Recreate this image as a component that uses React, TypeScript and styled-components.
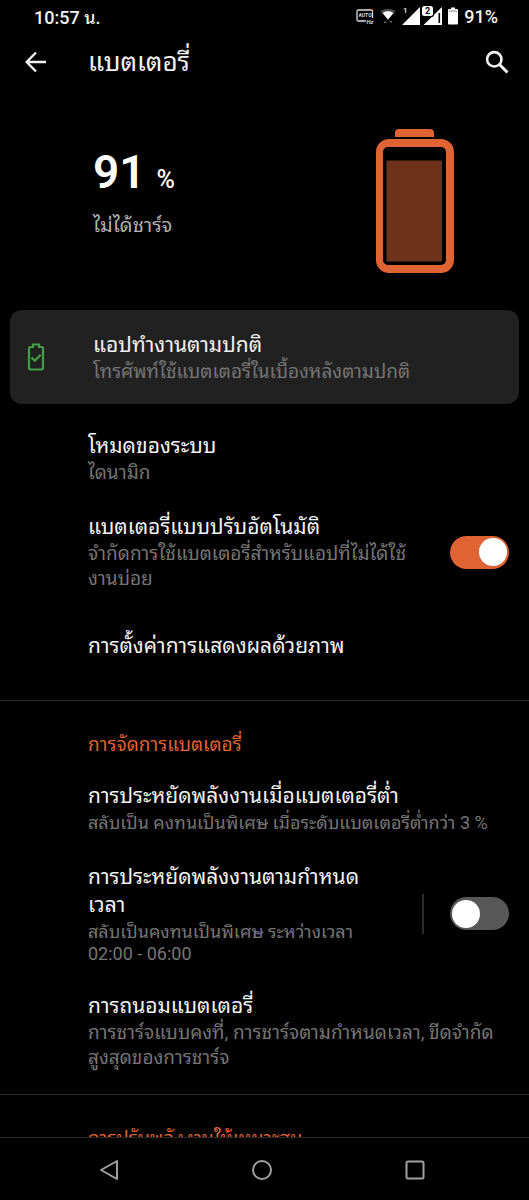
import React from "react";
import styled, { createGlobalStyle } from "styled-components";

const ACCENT = "#df6333";

const GlobalStyle = createGlobalStyle`
  * { box-sizing: border-box; }
  body {
    margin: 0;
    background: #000;
    color: #f2f2f2;
    font-family: Roboto, "Noto Sans Thai Looped", "Droid Sans Thai", Loma, Garuda, Waree, "Noto Sans", sans-serif;
  }
  p, h1, h2, h3 { margin: 0; font-weight: 400; }
`;

const Screen = styled.div`
  display: flex;
  flex-direction: column;
  height: 100vh;
  overflow: hidden;
`;

const StatusBar = styled.header`
  display: flex;
  justify-content: space-between;
  align-items: center;
  height: 32px;
  padding: 0 31px 0 34px;
  font-size: 18px;
  font-weight: 500;
  flex: none;
`;

const StatusIcons = styled.div`
  display: flex;
  align-items: center;
  gap: 6px;
`;

const AppBar = styled.div`
  display: flex;
  align-items: center;
  height: 60px;
  padding: 0 16px 0 20px;
  flex: none;
`;

const IconButton = styled.button`
  display: flex;
  align-items: center;
  justify-content: center;
  width: 32px;
  height: 32px;
  padding: 0;
  border: 0;
  background: none;
  color: inherit;
`;

const Title = styled.h1`
  flex: 1;
  margin-left: 36px;
  font-size: 26px;
  line-height: 36px;
`;

const Content = styled.main`
  flex: 1;
  min-height: 0;
  overflow: hidden;
`;

const Hero = styled.section`
  display: flex;
  justify-content: space-between;
  align-items: center;
  padding: 37px 75px 36px 93px;
`;

const HeroText = styled.div`
  padding-bottom: 22px;
`;

const Level = styled.p`
  display: flex;
  align-items: baseline;
  gap: 11px;
  font-size: 46px;
  line-height: 56px;
  font-weight: 600;
  color: #fff;
`;

const Percent = styled.span`
  font-size: 25px;
  font-weight: 500;
`;

const ChargeState = styled.p`
  margin-top: 5px;
  font-size: 20px;
  line-height: 25px;
  color: #b0b0b0;
`;

const StatusCard = styled.section`
  display: flex;
  align-items: center;
  min-height: 94px;
  margin: 0 10px;
  padding: 0 16px;
  border-radius: 12px;
  background: #212121;
`;

const CardIcon = styled.div`
  display: flex;
  width: 67px;
  flex: none;
`;

const Section = styled.section`
  padding: 13px 0;
`;

const DividedSection = styled(Section)`
  padding: 30px 0 10px;
  border-top: 1px solid #2a2a2a;
`;

const SectionTitle = styled.h2`
  padding: 0 20px 8px 88px;
  font-size: 19px;
  line-height: 28px;
  color: ${ACCENT};
`;

const Row = styled.div`
  display: flex;
  align-items: center;
  min-height: 82px;
  padding: 14px 20px 14px 88px;
`;

const RowText = styled.div`
  flex: 1;
  min-width: 0;
`;

const RowTitle = styled.h3`
  font-size: 21px;
  line-height: 28px;
`;

const Summary = styled.p<{ $compact?: boolean }>`
  font-size: ${(p) => (p.$compact ? 18 : 19)}px;
  line-height: 25px;
  color: #757575;
`;

const TimeRange = styled.span`
  display: block;
  line-height: 20px;
`;

const SwitchArea = styled.div<{ $divided?: boolean }>`
  display: flex;
  align-items: center;
  height: 40px;
  margin-left: ${(p) => (p.$divided ? 48 : 32)}px;
  padding-left: ${(p) => (p.$divided ? 26 : 0)}px;
  border-left: ${(p) => (p.$divided ? "2px solid #2c2c2c" : "0")};
`;

const Switch = styled.input`
  display: flex;
  align-items: center;
  appearance: none;
  width: 59px;
  height: 33px;
  margin: 0;
  padding: 0 2px;
  border-radius: 17px;
  background: #575757;

  &::before {
    content: "";
    width: 28px;
    height: 28px;
    border-radius: 50%;
    background: #fff;
  }

  &:checked {
    justify-content: flex-end;
    background: ${ACCENT};
  }
`;

const NavBar = styled.nav`
  display: flex;
  align-items: center;
  height: 63px;
  padding: 2px 38px 0 32px;
  border-top: 1px solid #2a2a2a;
  flex: none;
`;

const NavButton = styled(IconButton)`
  flex: 1;
  height: 48px;
  color: #a0a0a0;
`;

function AutoHzIcon() {
  return (
    <svg width="18" height="16" viewBox="0 0 18 16">
      <path d="M10 13H2.500a1.500 1.500 0 0 1-1.500-1.500V3.500A1.500 1.500 0 0 1 2.500 2H15a1.500 1.500 0 0 1 1.500 1.500V10" fill="none" stroke="#ddd" strokeWidth="1.300" />
      <text x="2.500" y="9" fontSize="5" fontWeight="700" fill="#ddd">AUTO</text>
      <text x="10.500" y="15.500" fontSize="6" fontWeight="700" fontStyle="italic" fill="#ddd">Hz</text>
    </svg>
  );
}

function WifiIcon() {
  return (
    <svg width="16" height="18" viewBox="0 0 16 18">
      <path d="M.5 4.500C4.500.7 11.500.7 15.500 4.500L8 13z" fill="#4a4a4a" />
      <path d="M2.700 6C5.500 3.700 10.500 3.700 13.300 6L8 12.500z" fill="#fff" />
      <path d="M3.500 16l1.500-2 1.500 2zM9.500 14h3L11 16z" fill="#777" />
    </svg>
  );
}

function SignalIcons() {
  return (
    <svg width="40" height="20" viewBox="0 0 40 20">
      <path d="M18 1v18H0zM40 1v18H21.500z" fill="#fff" />
      <path d="M36.500 7h1.600v10h-1.600z" fill="#000" />
      <text x="1" y="7" fontSize="8" fontWeight="500" fill="#eee">1</text>
      <rect x="19" y="-1" width="13" height="12" rx="2.500" fill="#000" />
      <rect x="20" y="0" width="11" height="10" rx="2.500" fill="#fff" />
      <text x="23" y="8" fontSize="9" fontWeight="700" fill="#000">2</text>
    </svg>
  );
}

function SmallBattery() {
  return (
    <svg width="10" height="18" viewBox="0 0 10 18">
      <path d="M3 .5h4V2h2a1 1 0 0 1 1 1v13.500a1 1 0 0 1-1 1H1a1 1 0 0 1-1-1V3a1 1 0 0 1 1-1h2z" fill="#fff" />
      <path d="M1 4h8" stroke="#888" strokeWidth="1" />
    </svg>
  );
}

function BigBattery() {
  return (
    <svg width="78" height="145" viewBox="0 0 78 145" role="img" aria-label="91 %">
      <path d="M19 8V4a4 4 0 0 1 4-4H54a4 4 0 0 1 4 4V8z" fill={ACCENT} />
      <path fillRule="evenodd" d="M13 10H65A13 13 0 0 1 78 23V131A13 13 0 0 1 65 144H13A13 13 0 0 1 0 131V23A13 13 0 0 1 13 10zM12 18A5 5 0 0 0 7 23V131A5 5 0 0 0 12 136H65A5 5 0 0 0 70 131V23A5 5 0 0 0 65 18z" fill={ACCENT} />
      <path d="M10.500 31.500H66V132.500H10.500z" fill="#6e3119" />
    </svg>
  );
}

function CheckBattery() {
  return (
    <svg width="20" height="28" viewBox="0 0 20 28" fill="none" stroke="#43a047">
      <path d="M7 1.500h6V4H15.500a1.500 1.500 0 0 1 1.500 1.500V25a1.500 1.500 0 0 1-1.500 1.500H4.500A1.500 1.500 0 0 1 3 25V5.500a1.500 1.500 0 0 1 1.500-1.500H7z" strokeWidth="2.200" />
      <path d="M5.500 14.500l3.200 3.200 6-6" strokeWidth="2.200" />
    </svg>
  );
}

export default function App() {
  return (
    <Screen>
      <GlobalStyle />
      <StatusBar>
        <span>10:57 น.</span>
        <StatusIcons>
          <AutoHzIcon />
          <WifiIcon />
          <SignalIcons />
          <SmallBattery />
          <span>91%</span>
        </StatusIcons>
      </StatusBar>
      <AppBar>
        <IconButton aria-label="ย้อนกลับ">
          <svg width="22" height="22" viewBox="0 0 22 22" fill="none" stroke="currentColor" strokeWidth="2.400">
            <path d="M21 11H2M11 1.500L1.700 11l9.300 9.500" />
          </svg>
        </IconButton>
        <Title>แบตเตอรี่</Title>
        <IconButton aria-label="ค้นหา">
          <svg width="24" height="24" viewBox="0 0 24 24" fill="none" stroke="currentColor">
            <circle cx="9.300" cy="9.300" r="7.200" strokeWidth="2.600" />
            <path d="M14.500 14.500l8 8" strokeWidth="3" />
          </svg>
        </IconButton>
      </AppBar>
      <Content>
        <Hero>
          <HeroText>
            <Level>91 <Percent>%</Percent></Level>
            <ChargeState>ไม่ได้ชาร์จ</ChargeState>
          </HeroText>
          <BigBattery />
        </Hero>
        <StatusCard>
          <CardIcon><CheckBattery /></CardIcon>
          <RowText>
            <RowTitle>แอปทำงานตามปกติ</RowTitle>
            <Summary>โทรศัพท์ใช้แบตเตอรี่ในเบื้องหลังตามปกติ</Summary>
          </RowText>
        </StatusCard>
        <Section>
          <Row>
            <RowText>
              <RowTitle>โหมดของระบบ</RowTitle>
              <Summary>ไดนามิก</Summary>
            </RowText>
          </Row>
          <Row>
            <RowText>
              <RowTitle as="label" htmlFor="adaptive">แบตเตอรี่แบบปรับอัตโนมัติ</RowTitle>
              <Summary>จำกัดการใช้แบตเตอรี่สำหรับแอปที่ไม่ได้ใช้งานบ่อย</Summary>
            </RowText>
            <SwitchArea>
              <Switch id="adaptive" type="checkbox" role="switch" defaultChecked />
            </SwitchArea>
          </Row>
          <Row>
            <RowText>
              <RowTitle>การตั้งค่าการแสดงผลด้วยภาพ</RowTitle>
            </RowText>
          </Row>
        </Section>
        <DividedSection>
          <SectionTitle>การจัดการแบตเตอรี่</SectionTitle>
          <Row>
            <RowText>
              <RowTitle>การประหยัดพลังงานเมื่อแบตเตอรี่ต่ำ</RowTitle>
              <Summary $compact>สลับเป็น คงทนเป็นพิเศษ เมื่อระดับแบตเตอรี่ต่ำกว่า 3 %</Summary>
            </RowText>
          </Row>
          <Row>
            <RowText>
              <RowTitle as="label" htmlFor="schedule">การประหยัดพลังงานตามกำหนดเวลา</RowTitle>
              <Summary $compact>
                สลับเป็นคงทนเป็นพิเศษ ระหว่างเวลา
                <TimeRange>02:00 - 06:00</TimeRange>
              </Summary>
            </RowText>
            <SwitchArea $divided>
              <Switch id="schedule" type="checkbox" role="switch" />
            </SwitchArea>
          </Row>
          <Row>
            <RowText>
              <RowTitle>การถนอมแบตเตอรี่</RowTitle>
              <Summary>การชาร์จแบบคงที่, การชาร์จตามกำหนดเวลา, ขีดจำกัดสูงสุดของการชาร์จ</Summary>
            </RowText>
          </Row>
        </DividedSection>
        <DividedSection>
          <SectionTitle>การปรับพลังงานให้เหมาะสม</SectionTitle>
        </DividedSection>
      </Content>
      <NavBar>
        <NavButton aria-label="กลับ">
          <svg width="20" height="22" viewBox="0 0 20 22" fill="none" stroke="currentColor" strokeWidth="2" strokeLinejoin="round">
            <path d="M18 2v18L2 11z" />
          </svg>
        </NavButton>
        <NavButton aria-label="หน้าแรก">
          <svg width="22" height="22" viewBox="0 0 22 22" fill="none" stroke="currentColor" strokeWidth="2">
            <circle cx="11" cy="11" r="9" />
          </svg>
        </NavButton>
        <NavButton aria-label="แอปล่าสุด">
          <svg width="22" height="22" viewBox="0 0 22 22" fill="none" stroke="currentColor" strokeWidth="2">
            <rect x="2.500" y="2.500" width="17" height="17" rx="1.500" />
          </svg>
        </NavButton>
      </NavBar>
    </Screen>
  );
}
